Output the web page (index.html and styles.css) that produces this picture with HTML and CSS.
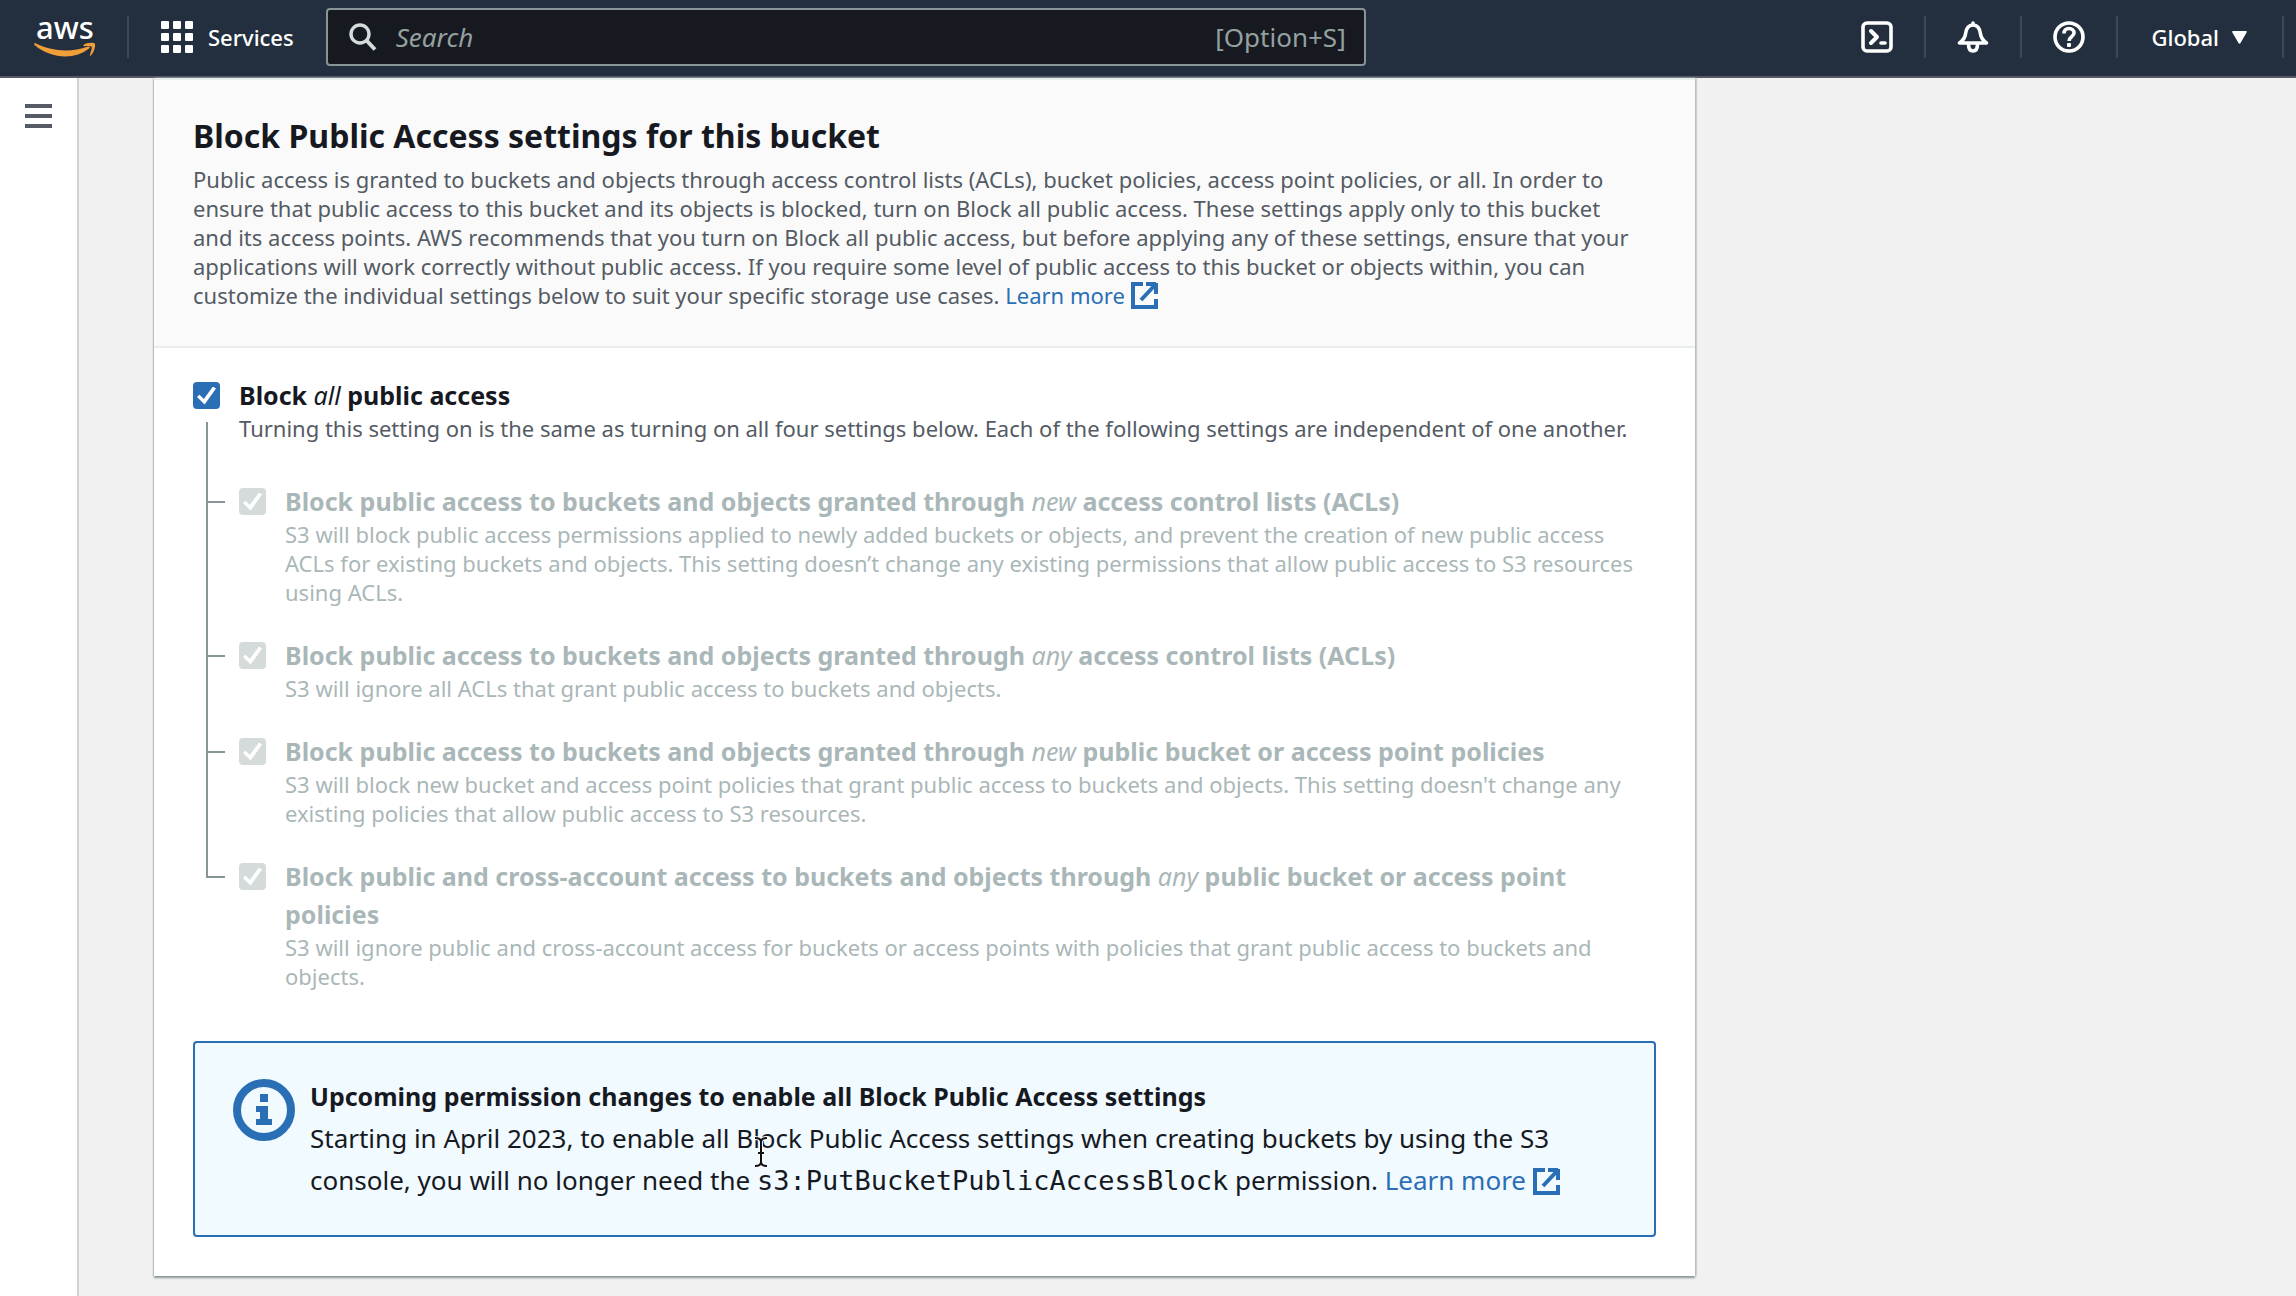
FILE: index.html
```
<!DOCTYPE html>
<html lang="en">
<head>
<meta charset="utf-8">
<meta name="viewport" content="width=device-width, initial-scale=1">
<title>Create S3 bucket</title>
<link rel="stylesheet" href="styles.css">
</head>
<body>
<svg class="sprite" aria-hidden="true">
  <symbol id="external" viewBox="0 0 27 27">
    <path d="M12 2H2v23h23v-8M15 2h10M25 1v11M24.500 2.500 10 18" fill="none" stroke="currentColor" stroke-width="4"/>
  </symbol>
</svg>

<header class="topbar">
  <a class="logo" href="#" aria-label="AWS home">
    <span class="logo-word">aws</span>
    <svg class="logo-smile" viewBox="0 0 62 16" aria-hidden="true">
      <path d="M1 1C17 9 36 11 54 4.500c1.500-.5 2.500 1 1 2C41 18 17 17 .5 3 0 2.300.2.800 1 1Z"/>
      <path d="M49.500 3C52 .5 59 .2 60.500 1.300c1.500 1.500 0 9-3.700 12.200-.8.5-1.200 0-.9-.8.900-2.500 2.400-6.700 1.700-7.900-.8-1.200-5-.8-7.400-.6-.8 0-1.200-.7-.7-1.200Z"/>
    </svg>
  </a>
  <button class="services" type="button">
    <svg class="icon" viewBox="0 0 32 32" aria-hidden="true">
      <g fill="currentColor">
        <rect x="0" y="0" width="8" height="8" rx="1"/><rect x="12" y="0" width="8" height="8" rx="1"/><rect x="24" y="0" width="8" height="8" rx="1"/>
        <rect x="0" y="12" width="8" height="8" rx="1"/><rect x="12" y="12" width="8" height="8" rx="1"/><rect x="24" y="12" width="8" height="8" rx="1"/>
        <rect x="0" y="24" width="8" height="8" rx="1"/><rect x="12" y="24" width="8" height="8" rx="1"/><rect x="24" y="24" width="8" height="8" rx="1"/>
      </g>
    </svg>
    Services
  </button>
  <label class="search">
    <svg class="search-icon" viewBox="0 0 28 28" aria-hidden="true">
      <circle cx="11" cy="11" r="9" fill="none" stroke="currentColor" stroke-width="3.400"/>
      <path d="m17.500 17.500 8.500 9" stroke="currentColor" stroke-width="4"/>
    </svg>
    <input class="search-input" type="search" placeholder="Search" aria-label="Search">
    <span class="shortcut">[Option+S]</span>
  </label>
  <nav class="tools" aria-label="Account tools">
    <button class="tool" type="button" aria-label="CloudShell">
      <svg class="icon" viewBox="0 0 32 32" aria-hidden="true">
        <g fill="none" stroke="currentColor" stroke-linecap="round" stroke-linejoin="round">
          <rect x="2" y="2" width="28" height="28" rx="4" stroke-width="3.600"/>
          <path d="m10 10 6 6-6 6" stroke-width="4"/>
          <path d="M20 22h4" stroke-width="3.600"/>
        </g>
      </svg>
    </button>
    <button class="tool" type="button" aria-label="Notifications">
      <svg class="icon" viewBox="0 0 32 32" aria-hidden="true">
        <g fill="none" stroke="currentColor" stroke-width="3.600" stroke-linecap="round" stroke-linejoin="round">
          <path d="M16 2v1.500M2.500 22h27c-4-3-5.500-5-6-9-.6-5-2.500-9-7.500-9s-6.900 4-7.500 9c-.5 4-2 6-6 9Z"/>
          <path d="M11.500 23c0 4.500 1.500 7 4.500 7s4.500-2.500 4.500-7"/>
        </g>
      </svg>
    </button>
    <button class="tool" type="button" aria-label="Help">
      <svg class="icon" viewBox="0 0 32 32" aria-hidden="true">
        <circle cx="16" cy="16" r="14" fill="none" stroke="currentColor" stroke-width="3.600"/>
        <path d="M11 12.500c0-3 2-5 5-5s5 1.800 5 4.500c0 3.500-5 3.700-5 8" fill="none" stroke="currentColor" stroke-width="3.600"/>
        <rect x="14" y="22" width="4" height="4" rx="1" fill="currentColor"/>
      </svg>
    </button>
    <button class="tool region" type="button">
      Global
      <svg class="caret" viewBox="0 0 15 13" aria-hidden="true"><path d="M1 0h13c1 0 1 1 .6 1.600L8.500 12c-.5.9-1.500.9-2 0L.4 1.600C0 1 0 0 1 0Z" fill="currentColor"/></svg>
    </button>
  </nav>
</header>

<div class="shell">
  <aside class="rail">
    <button class="menu" type="button" aria-label="Open navigation">
      <svg class="menu-icon" viewBox="0 0 27 24" aria-hidden="true"><path d="M0 2h27M0 12h27M0 22h27" stroke="currentColor" stroke-width="4"/></svg>
    </button>
  </aside>
  <main class="content">
    <section class="panel">
      <div class="panel-head">
        <h2 class="panel-title">Block Public Access settings for this bucket</h2>
        <p class="note">Public access is granted to buckets and objects through access control lists (ACLs), bucket policies, access point policies, or all. In order to ensure that public access to this bucket and its objects is blocked, turn on Block all public access. These settings apply only to this bucket and its access points. AWS recommends that you turn on Block all public access, but before applying any of these settings, ensure that your applications will work correctly without public access. If you require some level of public access to this bucket or objects within, you can customize the individual settings below to suit your specific storage use cases. <a class="link" href="#">Learn more <svg class="external"><use href="#external"/></svg></a></p>
      </div>
      <div class="panel-body">
        <div class="option">
          <input class="check" type="checkbox" id="block-all" checked>
          <div>
            <label class="option-label" for="block-all">Block <em>all</em> public access</label>
            <p class="note">Turning this setting on is the same as turning on all four settings below. Each of the following settings are independent of one another.</p>
          </div>
        </div>
        <ul class="tree">
          <li class="option branch">
            <input class="check" type="checkbox" id="new-acl" checked disabled>
            <div>
              <label class="option-label" for="new-acl">Block public access to buckets and objects granted through <em>new</em> access control lists (ACLs)</label>
              <p class="note">S3 will block public access permissions applied to newly added buckets or objects, and prevent the creation of new public access ACLs for existing buckets and objects. This setting doesn’t change any existing permissions that allow public access to S3 resources using ACLs.</p>
            </div>
          </li>
          <li class="option branch">
            <input class="check" type="checkbox" id="any-acl" checked disabled>
            <div>
              <label class="option-label" for="any-acl">Block public access to buckets and objects granted through <em>any</em> access control lists (ACLs)</label>
              <p class="note">S3 will ignore all ACLs that grant public access to buckets and objects.</p>
            </div>
          </li>
          <li class="option branch">
            <input class="check" type="checkbox" id="new-policy" checked disabled>
            <div>
              <label class="option-label" for="new-policy">Block public access to buckets and objects granted through <em>new</em> public bucket or access point policies</label>
              <p class="note">S3 will block new bucket and access point policies that grant public access to buckets and objects. This setting doesn't change any existing policies that allow public access to S3 resources.</p>
            </div>
          </li>
          <li class="option branch">
            <input class="check" type="checkbox" id="any-policy" checked disabled>
            <div>
              <label class="option-label" for="any-policy">Block public and cross-account access to buckets and objects through <em>any</em> public bucket or access point policies</label>
              <p class="note">S3 will ignore public and cross-account access for buckets or access points with policies that grant public access to buckets and objects.</p>
            </div>
          </li>
        </ul>
        <div class="alert" role="status">
          <svg class="alert-icon" viewBox="0 0 62 62" aria-hidden="true">
            <circle cx="31" cy="31" r="27" fill="none" stroke="currentColor" stroke-width="8"/>
            <path d="M27 15h8v8h-8zM23 27h12v13h4v6H23v-6h4v-7h-4z" fill="currentColor"/>
          </svg>
          <div>
            <h3 class="alert-title">Upcoming permission changes to enable all Block Public Access settings</h3>
            <p class="alert-text">Starting in April 2023, to enable all Block Public Access settings when creating buckets by using the S3 console, you will no longer need the <code>s3:PutBucketPublicAccessBlock</code> permission. <a class="link" href="#">Learn more <svg class="external"><use href="#external"/></svg></a></p>
          </div>
        </div>
      </div>
    </section>
  </main>
</div>
<svg class="pointer" viewBox="0 0 16 32" aria-hidden="true">
  <path d="M2 2c3 0 6 1 6 4 0-3 3-4 6-4M8 6v20M2 30c3 0 6-1 6-4 0 3 3 4 6 4M5 17h6" fill="none" stroke="#fff" stroke-width="4"/>
  <path d="M2 2c3 0 6 1 6 4 0-3 3-4 6-4M8 6v20M2 30c3 0 6-1 6-4 0 3 3 4 6 4M5 17h6" fill="none" stroke="#111" stroke-width="2"/>
</svg>
</body>
</html>
```
FILE: styles.css
```
* {
  box-sizing: border-box;
}

body {
  margin: 0;
  min-height: 100vh;
  display: flex;
  flex-direction: column;
  background: #f1f1f1;
  color: #16191f;
  font-family: "Noto Sans", "Open Sans", sans-serif;
  font-size: 22px;
  line-height: 29px;
}

h2, h3, p, ul {
  margin: 0;
  padding: 0;
}

button {
  padding: 0;
  border: 0;
  background: none;
  color: inherit;
  font: inherit;
}

.sprite {
  position: absolute;
  width: 0;
  height: 0;
}

/* Top bar */
.topbar {
  display: flex;
  align-items: center;
  height: 78px;
  padding: 0 12px 2px 34px;
  border-bottom: 2px solid #545a65;
  background: #232f3e;
  color: #fff;
  font-weight: 500;
}

.logo {
  display: flex;
  flex-direction: column;
  align-items: center;
  justify-content: flex-end;
  width: 95px;
  height: 42px;
  padding-right: 31px;
  border-right: 2px solid #414750;
  color: #fff;
  text-decoration: none;
}

.logo-word {
  font-size: 31px;
  line-height: 29px;
}

.logo-smile {
  flex: none;
  width: 62px;
  height: 16px;
  fill: #f19e39;
}

.icon {
  flex: none;
  width: 32px;
  height: 32px;
}

.services {
  display: flex;
  align-items: center;
  gap: 15px;
  margin: 0 32px;
}

.search {
  display: flex;
  align-items: center;
  flex: 0 1 1040px;
  min-width: 0;
  height: 58px;
  padding: 0 18px 0 21px;
  border: 2px solid #879596;
  border-radius: 4px;
  background: #16191f;
  color: #95a0a1;
  font-size: 26px;
  font-weight: 400;
}

.search-icon {
  flex: none;
  width: 28px;
  height: 28px;
  color: #d5dbdb;
}

.search-input {
  flex: 1;
  min-width: 0;
  padding: 0 0 0 19px;
  border: 0;
  outline: 0;
  background: none;
  color: #fff;
  font: inherit;
}

.search-input::placeholder {
  color: #95a0a1;
  font-style: italic;
  opacity: 1;
}

.tools {
  display: flex;
  margin-left: auto;
}

.tool {
  display: flex;
  align-items: center;
  height: 42px;
  padding: 0 31px;
  border-right: 2px solid #414750;
}

.region {
  gap: 13px;
  padding: 0 35px 0 33px;
}

.caret {
  width: 15px;
  height: 13px;
}

/* Page frame */
.shell {
  display: flex;
  flex: 1;
}

.rail {
  flex: none;
  width: 79px;
  padding: 26px 25px;
  border-right: 2px solid #cfd4d4;
  background: #fff;
}

.menu {
  display: block;
  color: #545b64;
}

.menu-icon {
  display: block;
  width: 27px;
  height: 24px;
}

.content {
  flex: 1;
  min-width: 0;
  padding: 0 75px 20px;
}

.panel {
  max-width: 1541px;
  border-top: 2px solid #eaeded;
  background: #fff;
  box-shadow: 0 2px 2px #879596, 2px 0 1px #d0d6d6, -1px 0 1px #d0d6d6;
}

.panel-head {
  padding: 38px 39px 36px;
  border-bottom: 2px solid #eaeded;
  background: #fafafa;
}

.panel-title {
  margin-bottom: 11px;
  font-size: 32px;
  font-weight: 700;
  line-height: 36px;
}

.panel-body {
  padding: 28px 39px 39px;
}

.note {
  padding-right: 18px;
  color: #545b64;
}

.link {
  color: #2a6fb5;
  text-decoration: none;
}

.external {
  width: 27px;
  height: 27px;
  vertical-align: -5px;
}

/* Options */
.option {
  display: grid;
  grid-template-columns: 27px 1fr;
  column-gap: 19px;
}

.option-label {
  display: block;
  font-size: 25px;
  font-weight: 700;
  line-height: 38px;
}

.option-label em {
  font-weight: 400;
}

.check {
  appearance: none;
  display: grid;
  place-items: center;
  width: 27px;
  height: 27px;
  margin: 6px 0 0;
  border-radius: 4px;
  background: #2a6fb5;
}

.check:checked::before {
  content: "";
  width: 19px;
  height: 18px;
  background: #fff;
  clip-path: polygon(0 59%, 13% 46%, 36% 70%, 84% 0, 100% 11%, 40% 100%);
}

.check:disabled {
  background: #d5dbdb;
}

.tree {
  display: flex;
  flex-direction: column;
  gap: 29px;
  margin: 39px 0 50px 13px;
  list-style: none;
}

.branch {
  position: relative;
  padding-left: 33px;
}

.branch .option-label,
.branch .note {
  color: #aab7b8;
}

/* Connector lines: a trunk that reaches the next branch, and a tick to each box */
.branch::before {
  content: "";
  position: absolute;
  top: -29px;
  left: 0;
  width: 2px;
  height: calc(100% + 29px);
  background: #879596;
}

.branch:first-child::before {
  top: -60px;
  height: calc(100% + 60px);
}

.branch:last-child::before {
  height: 50px;
}

.branch::after {
  content: "";
  position: absolute;
  top: 19px;
  left: 0;
  width: 19px;
  height: 2px;
  background: #879596;
}

/* Alert */
.alert {
  display: flex;
  align-items: flex-start;
  gap: 15px;
  padding: 32px 33px 34px 38px;
  border: 2px solid #2a6fb5;
  border-radius: 4px;
  background: #f1faff;
}

.alert-icon {
  flex: none;
  width: 62px;
  height: 62px;
  margin-top: 4px;
  color: #2a6fb5;
}

.alert-title {
  font-size: 25px;
  font-weight: 700;
  line-height: 42px;
}

.alert-text {
  font-size: 26px;
  line-height: 42px;
}

.alert-text code {
  font-family: "DejaVu Sans Mono", monospace;
  font-size: 27px;
  line-height: 29px;
}

/* Text pointer over the page */
.pointer {
  position: absolute;
  top: 1136px;
  left: 753px;
  width: 16px;
  height: 32px;
}
```
